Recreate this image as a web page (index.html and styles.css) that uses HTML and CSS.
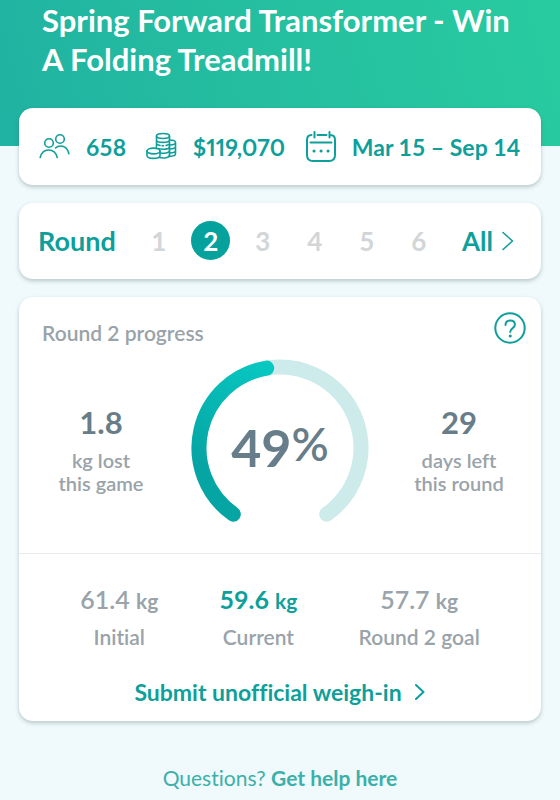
FILE: index.html
```html
<!DOCTYPE html>
<html lang="en">
<head>
    <meta charset="UTF-8">
    <meta name="viewport" content="width=device-width, initial-scale=1.0">
    <title>Spring Forward Transformer</title>
    <link rel="stylesheet" href="styles.css">
</head>
<body>
    <header class="hero">
        <h1>Spring Forward Transformer - Win A Folding Treadmill!</h1>
    </header>

    <main class="content">
        <!-- Game summary -->
        <section class="card summary">
            <div class="summary-item">
                <svg class="icon" width="32" height="32" viewBox="0 0 32 32">
                    <circle cx="10" cy="12" r="4.3"/>
                    <circle cx="21" cy="8" r="4.3"/>
                    <path d="M1.2 26.5C2.4 21.5 5.6 19 9.6 19s7.400 2.500 8.600 7.500"/>
                    <path d="M16.500 17c1.300-1.300 3-2 5-2 4 0 7.200 2.700 8.400 7.800"/>
                </svg>
                <span>658</span>
            </div>
            <div class="summary-item">
                <svg class="icon" width="32" height="32" viewBox="0 0 32 32">
                    <ellipse cx="17" cy="5" rx="6.500" ry="2.500"/>
                    <path d="M10.500 5v12M23.500 5v20.500M10.500 9c0 3.200 13 3.200 13 0"/>
                    <path d="M11 13.500l3 1M16 14.700h1.500M20 14.500l3-1"/>
                    <ellipse cx="7.500" cy="20" rx="6.500" ry="2.900"/>
                    <path d="M1 20v4.500c0 3.800 13 3.800 13 0V20"/>
                    <path d="M12.500 17.500c4 1.500 11 .6 11-1.600M14 22c4 .6 9.500 0 9.500-2.200M13.500 26.500c4 1 10 .2 10-2.300"/>
                    <path d="M23.500 9c3.500 0 6 .8 6 2.300v11.500c0 1.600-2.700 2.500-6 2.600M23.500 14c3.500 0 6-.8 6-2.400M23.500 18c3.500 0 6-.8 6-2.400M23.500 22c3.500 0 6-.8 6-2.400"/>
                </svg>
                <span class="prize">$119,070</span>
            </div>
            <div class="summary-item">
                <svg class="icon icon-bold" width="32" height="32" viewBox="0 0 32 32">
                    <path d="M6.500 4C3.500 4 2 6 2 9v15c0 4 2 6 6 6h16c4 0 6-2 6-6V9c0-3-1.500-5-4.500-5M12.500 4h9M9.500 1v5.500M24.500 1v5.500M5.500 11.500h21"/>
                    <path class="dots" d="M9 20h.1M16 20h.1M23 20h.1"/>
                </svg>
                <span>Mar 15 – Sep 14</span>
            </div>
        </section>

        <!-- Round picker -->
        <nav class="card rounds">
            <span class="rounds-title">Round</span>
            <div class="rounds-list">
                <button type="button" class="round">1</button>
                <button type="button" class="round active" aria-current="true">2</button>
                <button type="button" class="round">3</button>
                <button type="button" class="round">4</button>
                <button type="button" class="round">5</button>
                <button type="button" class="round">6</button>
            </div>
            <a href="#" class="all-link">All
                <svg class="icon" width="12" height="20" viewBox="0 0 12 20"><path d="M1 1.500L10.500 10 1 18.500"/></svg>
            </a>
        </nav>

        <!-- Progress for the selected round -->
        <section class="card progress">
            <div class="progress-head">
                <h2>Round 2 progress</h2>
                <button type="button" class="help" aria-label="Help">
                    <svg class="icon icon-bold" width="32" height="32" viewBox="0 0 32 32">
                        <circle cx="16" cy="16" r="14.700"/>
                        <path d="M11.500 13c0-2.800 1.900-4.500 4.700-4.500s4.700 1.700 4.700 4.200c0 3.600-4.700 3.200-4.700 7.300"/>
                        <path class="dots" d="M16.200 24h.1"/>
                    </svg>
                </button>
            </div>

            <div class="progress-body">
                <div class="side-stat">
                    <strong>1.8</strong>
                    <span>kg lost<br>this game</span>
                </div>
                <div class="gauge">
                    <svg width="178" height="164" viewBox="0 0 178 164">
                        <defs>
                            <linearGradient id="gaugeFill" gradientUnits="userSpaceOnUse" x1="20" y1="110" x2="84" y2="10">
                                <stop offset="0" stop-color="#05a5a3"/>
                                <stop offset="1" stop-color="#08c8c2"/>
                            </linearGradient>
                        </defs>
                        <path class="gauge-track" d="M42.300 155.200A81 81 0 1 1 135.700 155.200"/>
                        <path class="gauge-value" d="M42.300 155.200A81 81 0 0 1 75.700 9.100"/>
                    </svg>
                    <p class="gauge-label">49<span>%</span></p>
                </div>
                <div class="side-stat">
                    <strong>29</strong>
                    <span>days left<br>this round</span>
                </div>
            </div>

            <div class="weights">
                <div class="weight">
                    <strong>61.4 <small>kg</small></strong>
                    <span>Initial</span>
                </div>
                <div class="weight current">
                    <strong>59.6 <small>kg</small></strong>
                    <span>Current</span>
                </div>
                <div class="weight">
                    <strong>57.7 <small>kg</small></strong>
                    <span>Round 2 goal</span>
                </div>
            </div>

            <a href="#" class="submit-link">Submit unofficial weigh-in
                <svg class="icon icon-bold" width="12" height="16" viewBox="0 0 12 16"><path d="M2 1l7.500 7L2 15"/></svg>
            </a>
        </section>
    </main>

    <footer class="footer">Questions? <a href="#">Get help here</a></footer>
</body>
</html>
```

FILE: styles.css
```css
* {
    box-sizing: border-box;
}
body {
    margin: 0;
    font-family: Lato, "Open Sans", sans-serif;
    font-variant-ligatures: none;
    background-color: #f0fafc;
    color: #99a3a9;
}
h1, h2, p {
    margin: 0;
}
a {
    color: inherit;
    text-decoration: none;
}
button {
    padding: 0;
    border: none;
    background: none;
    font: inherit;
    color: inherit;
    cursor: pointer;
}
.icon {
    display: block;
    flex: none;
    fill: none;
    stroke: currentColor;
    stroke-width: 1.6;
    stroke-linecap: round;
    stroke-linejoin: round;
}
.icon-bold {
    stroke-width: 2;
}
.icon .dots {
    stroke-width: 3;
}

/* Header */
.hero {
    padding: 1px 30px 67px 42px;
    background: linear-gradient(75deg, #20b2a2, #24bda0 40%, #28cba0);
    color: #fff;
}
.hero h1 {
    font-size: 31px;
    line-height: 39px;
    font-weight: 700;
}

/* Cards */
.content {
    display: flex;
    flex-direction: column;
    gap: 18px;
    margin-top: -38px;
    padding: 0 19px;
}
.card {
    background: #fff;
    border-radius: 14px;
    box-shadow: 0 2px 4px rgba(60, 80, 80, 0.3);
}
.summary {
    display: flex;
    align-items: center;
    justify-content: space-between;
    padding: 23px 21px 22px 20px;
    font-size: 23px;
    line-height: 32px;
    font-weight: 700;
    color: #0e9f9b;
}
.summary-item {
    display: flex;
    align-items: center;
    gap: 15px;
    white-space: nowrap;
}
.prize {
    font-variant-numeric: proportional-nums;
}

/* Round picker */
.rounds {
    display: flex;
    align-items: center;
    justify-content: space-between;
    padding: 18px 27px 19px 19px;
    font-size: 26px;
    font-weight: 700;
    color: #0e9f9b;
}
.rounds-title {
    font-size: 27px;
}
.rounds-list {
    display: flex;
    gap: 13px;
}
.round {
    width: 39px;
    height: 39px;
    border-radius: 50%;
    color: #d2d6d9;
}
.round.active {
    background: #05a19d;
    color: #fff;
}
.all-link {
    display: flex;
    align-items: center;
    gap: 9px;
}

/* Progress */
.progress {
    padding-bottom: 12px;
}
.progress-head {
    display: flex;
    align-items: flex-end;
    justify-content: space-between;
    padding: 15px 15px 0 23px;
}
.progress-head h2 {
    font-size: 21px;
    line-height: 22px;
    font-weight: 600;
}
.help {
    color: #0e9f9b;
}
.progress-body {
    display: grid;
    grid-template-columns: 1fr 178px 1fr;
    gap: 8px;
    padding: 15px 0 30px;
    border-bottom: 1px solid #e8ecee;
}
.side-stat {
    padding-top: 46px;
    text-align: center;
    font-size: 20px;
    line-height: 23px;
    font-weight: 600;
}
.side-stat strong {
    display: block;
    margin-bottom: 10px;
    font-size: 31px;
    line-height: 34px;
    font-weight: 700;
    color: #677d89;
}
.gauge {
    display: grid;
}
.gauge > * {
    grid-area: 1 / 1;
}
.gauge path {
    fill: none;
    stroke-width: 15;
    stroke-linecap: round;
}
.gauge .gauge-track {
    stroke: #ccebea;
}
.gauge .gauge-value {
    stroke: url(#gaugeFill);
}
.gauge-label {
    display: flex;
    justify-content: center;
    padding-top: 58px;
    font-size: 52px;
    line-height: 60px;
    font-weight: 700;
    color: #677d89;
}
.gauge-label span {
    font-size: 46px;
    line-height: 54px;
    font-weight: 600;
}
.weights {
    display: flex;
    justify-content: space-evenly;
    padding: 29px 0 25px;
    text-align: center;
}
.weight {
    font-size: 21px;
    line-height: 26px;
    font-weight: 600;
}
.weight strong {
    display: block;
    margin-bottom: 7px;
    font-size: 25px;
    line-height: 32px;
    font-weight: 600;
}
.weight small {
    font-size: 21px;
    font-weight: 700;
}
.weight.current strong {
    font-weight: 700;
    color: #0e9f9b;
}
.submit-link {
    display: flex;
    align-items: center;
    justify-content: center;
    gap: 12px;
    font-size: 23px;
    line-height: 34px;
    font-weight: 700;
    color: #0e9f9b;
}

.footer {
    padding: 44px 0 9px;
    text-align: center;
    font-size: 21px;
    line-height: 26px;
    color: #3bb0aa;
}
.footer a {
    font-weight: 700;
}
```
